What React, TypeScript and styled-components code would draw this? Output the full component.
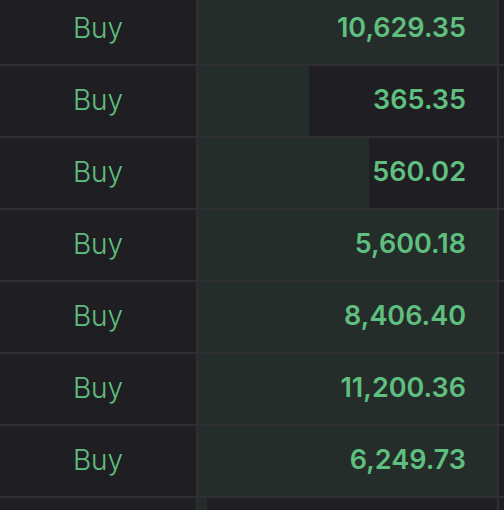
import React from "react";
import styled, { createGlobalStyle } from "styled-components";

const GlobalStyle = createGlobalStyle`
html, body {
    margin: 0;
    padding: 0;
    background: #1f1f23;
    overflow: hidden;
}
`;

type Trade = { side: string; total: string; fill: number };

const trades: Trade[] = [
    { side: "Buy", total: "10,629.35", fill: 100 },
    { side: "Buy", total: "365.35", fill: 37.1 },
    { side: "Buy", total: "560.02", fill: 57.2 },
    { side: "Buy", total: "5,600.18", fill: 100 },
    { side: "Buy", total: "8,406.40", fill: 100 },
    { side: "Buy", total: "11,200.36", fill: 100 },
    { side: "Buy", total: "6,249.73", fill: 100 },
    { side: "", total: "", fill: 3 },
];

const Table = styled.div`
width: 520px;
height: 516px;
margin-top: -6px;
display: grid;
grid-template-columns: 196px 299px 1fr;
grid-auto-rows: 70px;
gap: 2px;
background: #2f2f34;
overflow: hidden;
`;

const Cell = styled.div`
position: relative;
background: #1f1f23;
display: flex;
align-items: center;
overflow: hidden;
padding-bottom: 3px;
box-sizing: border-box;
`;

const SideCell = styled(Cell)`
justify-content: center;
font-family: "Inter", "Liberation Sans", sans-serif;
font-weight: 300;
font-size: 28px;
color: #5fbf7f;
`;

const TotalCell = styled(Cell)`
justify-content: flex-end;
padding-right: 31px;
`;

const Bar = styled.div`
position: absolute;
left: 0;
top: 0;
bottom: 0;
background: #252d2b;
`;

const Amount = styled.span`
position: relative;
font-family: "Inter", "Liberation Sans", sans-serif;
font-weight: 600;
font-size: 27px;
color: #5fbf7f;
`;

export default function App() {
    return (
        <>
            <GlobalStyle />
            <Table>
                {trades.map((t, i) => (
                    <React.Fragment key={i}>
                        <SideCell>{t.side}</SideCell>
                        <TotalCell>
                            <Bar style={{ width: `${t.fill}%` }} />
                            <Amount>{t.total}</Amount>
                        </TotalCell>
                        <Cell />
                    </React.Fragment>
                ))}
            </Table>
        </>
    );
}
